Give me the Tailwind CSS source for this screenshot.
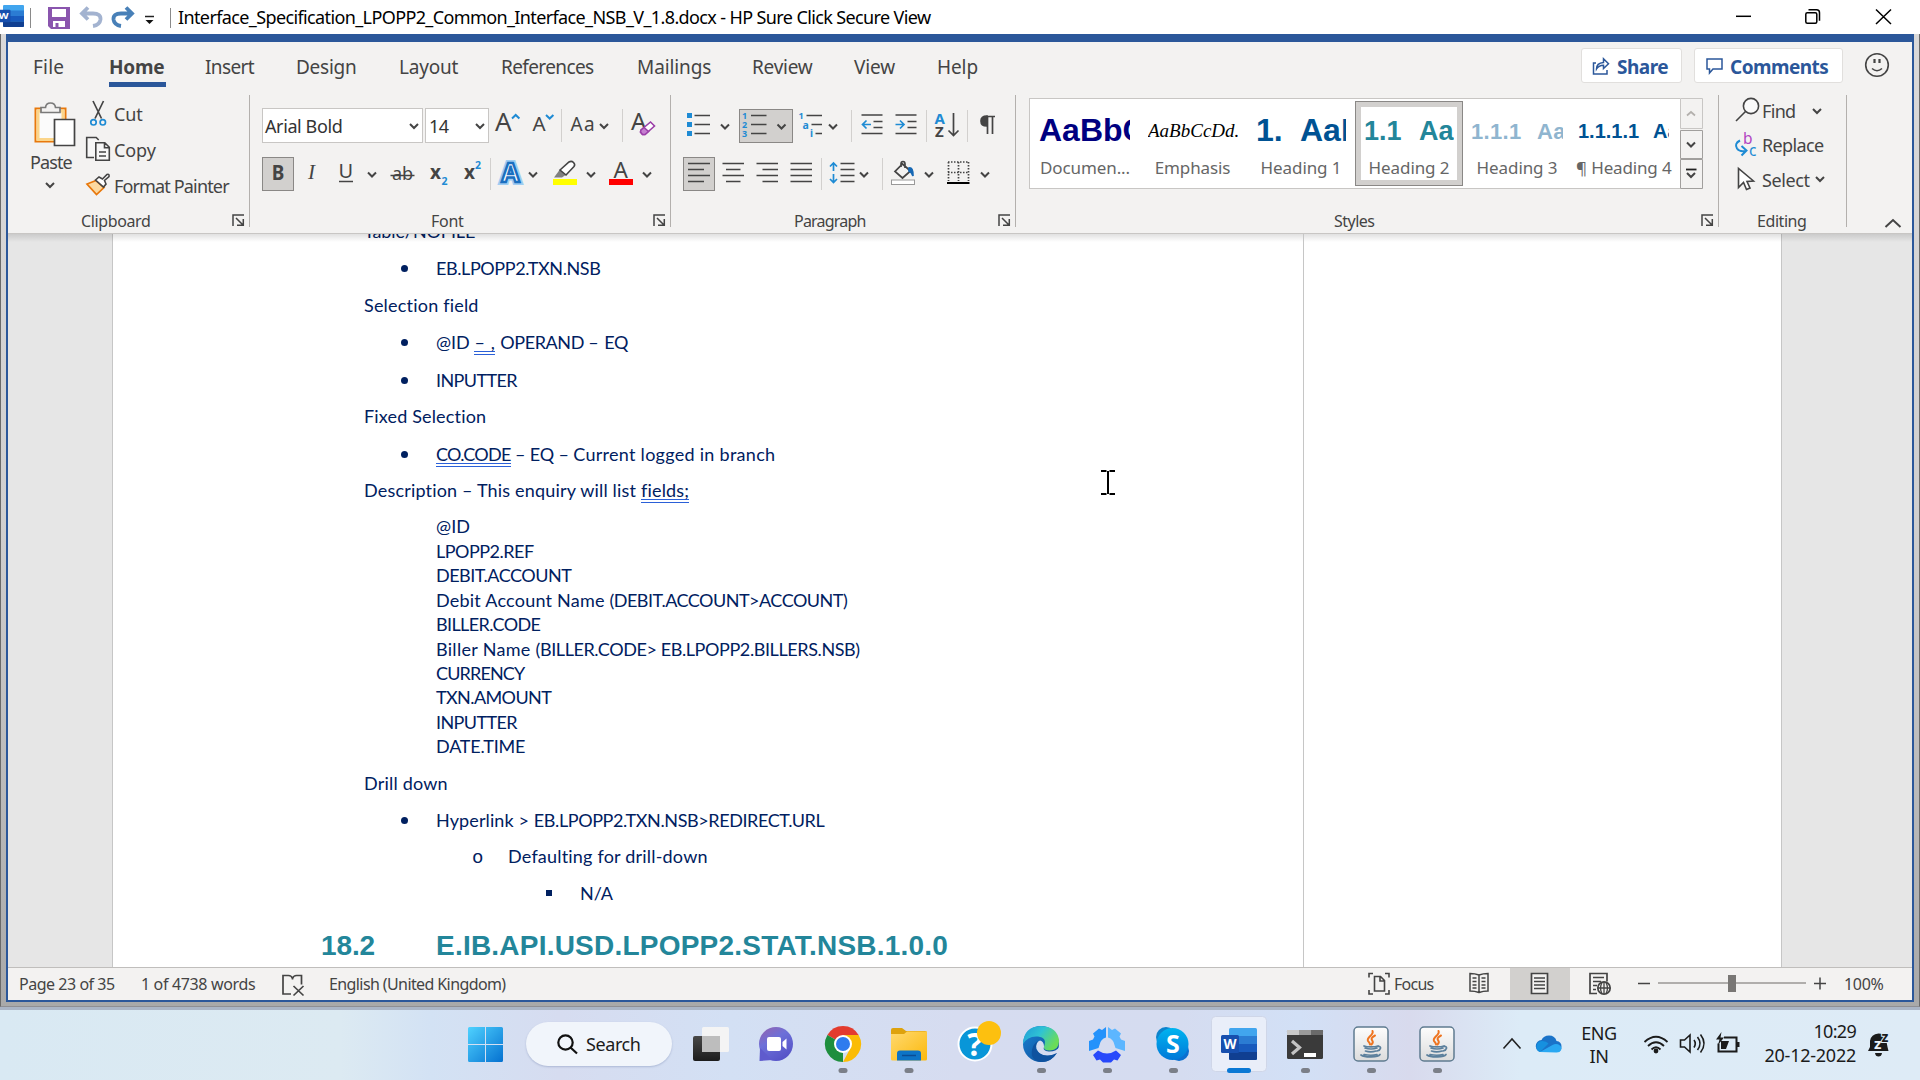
<!DOCTYPE html>
<html lang="en">
<head>
<meta charset="utf-8">
<title>Interface_Specification_LPOPP2_Common_Interface_NSB_V_1.8.docx</title>
<script src="https://cdn.jsdelivr.net/npm/@tailwindcss/browser@4"></script>
</head>
<body class="w-[1920px] h-[1080px] overflow-hidden bg-white font-['Noto_Sans',sans-serif] text-[#444444] whitespace-nowrap">
<svg width="0" height="0" class="absolute">
  <defs>
    <path id="chev" d="M-4 -2 0 2 4 -2" fill="none" stroke="#444" stroke-width="2"/>
    <g id="launch" fill="none" stroke="#444" stroke-width="1.5"><path d="M1 12V1h11M4 4l6.500 6.500M11.300 5v6.300H5"/></g>
    <linearGradient id="sky" x1="468" y1="1027" x2="503" y2="1062" gradientUnits="userSpaceOnUse"><stop offset="0" stop-color="#4fd2ff"/><stop offset="1" stop-color="#0571d0"/></linearGradient>
    <linearGradient id="chat" x1="0" y1="0" x2=".6" y2="1"><stop offset="0" stop-color="#9763ad"/><stop offset=".45" stop-color="#6d70d8"/><stop offset="1" stop-color="#5754c8"/></linearGradient>
    <linearGradient id="fold" x1="0" y1="0" x2="1" y2="1"><stop offset="0" stop-color="#ffd970"/><stop offset="1" stop-color="#fbb90c"/></linearGradient>
    <linearGradient id="edgeTop" x1="0" y1="0" x2="1" y2=".5"><stop offset="0" stop-color="#1f9ad8"/><stop offset=".5" stop-color="#2fc3d4"/><stop offset="1" stop-color="#6bdc58"/></linearGradient>
    <linearGradient id="edgeLow" x1="0" y1="0" x2="1" y2="1"><stop offset="0" stop-color="#1a82d4"/><stop offset="1" stop-color="#0d4a94"/></linearGradient>
    <linearGradient id="skype" x1="0" y1="0" x2="0" y2="1"><stop offset="0" stop-color="#00b4f0"/><stop offset="1" stop-color="#0078d8"/></linearGradient>
    <linearGradient id="dark" x1="0" y1="0" x2="0" y2="1"><stop offset="0" stop-color="#484848"/><stop offset="1" stop-color="#1c1c1c"/></linearGradient>
    <linearGradient id="paper" x1="0" y1="0" x2="0" y2="1"><stop offset="0" stop-color="#fdfdfd"/><stop offset="1" stop-color="#dcdcdc"/></linearGradient>
    <g id="word">
      <rect x="8" y="0" width="28" height="32" rx="1.500" fill="#41a5ee"/>
      <path d="M8 8h28v8H8z" fill="#2b7cd3"/><path d="M8 16h28v8H8z" fill="#185abd"/><path d="M8 24h28v6.500q0 1.500-1.500 1.500H9.500Q8 32 8 30.500z" fill="#103f91"/>
      <rect x="0" y="7" width="18" height="18" rx="1.500" fill="#174fae"/>
      <text x="9" y="20.800" text-anchor="middle" font-family="Noto Sans" font-weight="700" font-size="13.500" fill="#fff">W</text>
    </g>
    <g id="java">
      <rect x="1" y="1" width="34" height="34" rx="4" fill="url(#paper)" stroke="#5f7b90" stroke-width="1.500"/>
      <g fill="none" stroke-linecap="round">
        <path d="M19.500 5c2 4-6.500 6-4.500 10 1 1.500 2 2 2 3.500M22 9.500c-4 2-4 3.500-2.500 5.500 .8 1.300 0 2.500-1 3.500" stroke="#ee7420" stroke-width="2"/>
        <path d="M11 20c3 1.300 11 1.300 14 0M12 22q6 2 12 0M12.500 25q5 1.600 10.500 0M25 20.500c4-.5 3 3.500-1 4.500M8 29c4 2.800 17 2.500 19-.5M11 28.500q7 1.500 13 0" stroke="#5b7f9c" stroke-width="1.700"/>
      </g>
    </g>
  </defs>
</svg>

<!-- Title bar -->
<header class="flex h-[34px] bg-white">
  <svg class="shrink-0" width="176" height="34" viewBox="0 0 176 34">
    <svg x="-3" y="5" width="27" height="22" viewBox="0 0 36 32" preserveAspectRatio="none"><use href="#word"/></svg>
    <path d="M30.500 8v20M170.500 8v20" stroke="#8a8a8a"/>
    <path d="M48 7h22v22H51l-3-3z" fill="#8a55ae"/><path d="M52 9h14v8H52zM53 21h12v6H53z" fill="#fff"/><path d="M55.500 23h3v4h-3z" fill="#8a55ae"/>
    <path d="M82 13.500h11q8 0 7.500 6-.8 5.500-7.500 6.500M88 7.500l-6 6 6 6" fill="none" stroke="#a3b3d0" stroke-width="3.800"/>
    <path d="M132 13.500h-11q-8 0-7.500 6 .8 5.500 7.500 6.500M126 7.500l6 6-6 6" fill="none" stroke="#4880b8" stroke-width="3.800"/>
    <path d="M145 16.500h9" stroke="#222" stroke-width="1.500"/><path d="M145.500 20h8l-4 4z" fill="#111"/>
  </svg>
  <div class="grow pl-[2px] text-[18px] leading-[35px] tracking-[-0.62px] text-black">Interface_Specification_LPOPP2_Common_Interface_NSB_V_1.8.docx - HP Sure Click Secure View</div>
  <svg class="shrink-0" width="220" height="34" viewBox="1700 0 220 34" fill="none" stroke="#000" stroke-width="1.500">
    <path d="M1736 16.300h15"/><rect x="1805.800" y="12.800" width="11" height="10.500" rx="1.500"/><path d="M1808.500 9.800h8q3 0 3 3v8"/><path d="M1876 9.500l15 14.500M1891 9.500 1876 24"/>
  </svg>
</header>

<!-- Application window -->
<main class="h-[973px] border-x border-b border-[#6a6a6a] border-b-[#8f8f93] px-[5px] bg-linear-to-b from-[#dad9d9] via-[#d0cfcf] to-[#a9a9a9]">
<div class="h-[968px] border-2 border-t-8 border-[#2b579a] bg-[#f3f2f1] flex flex-col">

  <!-- Ribbon tabs -->
  <nav class="flex h-[50px] shrink-0 text-[19px] leading-[50px] pl-[25px]">
    <div class="w-[75px] tracking-[0.2px]">File</div>
    <div class="w-[57px] ml-[1px] mr-[39px] h-[45px] border-b-[5px] border-[#2b579a] font-bold tracking-[-0.2px]">Home</div>
    <div class="w-[91px] tracking-[-0.6px]">Insert</div>
    <div class="w-[103px] tracking-[-0.25px]">Design</div>
    <div class="w-[102px] tracking-[-0.2px]">Layout</div>
    <div class="w-[136px] tracking-[-0.61px]">References</div>
    <div class="w-[115px] tracking-[-0.1px]">Mailings</div>
    <div class="w-[102px] tracking-[-0.25px]">Review</div>
    <div class="w-[83px] tracking-[-0.1px]">View</div>
    <div class="tracking-[-0.1px]">Help</div>
    <div class="ml-auto mt-[6px] flex items-center h-[35px] w-[101px] rounded-[3px] border border-[#e1dfdd] bg-white text-[#2b579a] font-bold tracking-[-0.5px]">
      <svg class="ml-[10px] mr-[7px]" width="18" height="18" viewBox="0 0 18 18" fill="none" stroke="#2b579a" stroke-width="1.500"><path d="M4 6H1.500v11H15v-4M4.500 12q0-6 7-6.500V1.800l5 5-5 4.700V8.300Q6.500 8.500 4.500 12z"/></svg><span class="pt-[2px]">Share</span></div>
    <div class="ml-[12px] mt-[6px] flex items-center h-[35px] w-[149px] rounded-[3px] border border-[#e1dfdd] bg-white text-[#2b579a] font-bold tracking-[-0.55px]">
      <svg class="ml-[11px] mr-[7px]" width="17" height="18" viewBox="0 0 17 18" fill="none" stroke="#2b579a" stroke-width="1.500"><path d="M1 2h15v10H7l-3.500 4v-4H1z"/></svg><span class="pt-[2px]">Comments</span></div>
    <svg class="ml-[20px] mr-[21px] mt-[9px]" width="28" height="28" viewBox="1863 51 28 28" fill="none" stroke="#444" stroke-width="1.600"><circle cx="1877" cy="65" r="11.300"/><path d="M1872 68.500q5 4.500 10 0"/><path d="M1874.500 59v4M1879.500 59v4" stroke-width="2.200"/></svg>
  </nav>

  <!-- Ribbon groups -->
  <div class="flex h-[141px] shrink-0 pt-[3px] text-[18px]">

    <section class="w-[242px] h-[132px] border-r border-[#b3b0ad] flex flex-col shrink-0">
      <div class="flex h-[108px]">
        <div class="w-[76px] pl-[22px] shrink-0">
          <svg width="52" height="53" viewBox="30 95 52 53">
            <path d="M35.500 108.500h30v33h-30z" fill="#fff" stroke="#e8780c" stroke-width="2"/><path d="M38 111h25v28.500H38z" fill="#fbfbfb" stroke="#fbd58a" stroke-width="3"/>
            <path d="M41 112.500v-5h4.500q.5-4.500 5-4.500t5 4.500H60v5z" fill="#f3f2f1" stroke="#7a7a7a" stroke-width="1.700"/>
            <path d="M54.500 119.500h20v26h-20z" fill="#fff" stroke="#444" stroke-width="1.700"/>
          </svg>
          <div class="leading-[26px] mt-[1px] tracking-[-0.9px]">Paste</div>
          <svg class="ml-[12px] mt-[5px]" width="16" height="10" viewBox="-8 -5 16 10"><use href="#chev"/></svg>
        </div>
        <div class="flex flex-col pt-[2px]">
          <div class="flex h-[36px] leading-[34px] tracking-[-0.17px]">
            <svg class="w-[30px] shrink-0" height="36" viewBox="84 97 30 36" fill="none" stroke-width="1.700"><path d="M93 101l8.500 17.500M103.500 101 95 118.500" stroke="#444"/><circle cx="93.500" cy="122.300" r="2.700" stroke="#1e8bd4"/><circle cx="102.800" cy="122.300" r="2.700" stroke="#1e8bd4"/></svg>Cut</div>
          <div class="flex h-[36px] leading-[34px] tracking-[-0.1px]">
            <svg class="w-[30px] shrink-0" height="36" viewBox="84 133 30 36" fill="#f7f7f7" stroke="#444" stroke-width="1.600"><path d="M94 157.500h-7.300v-20h9.500l2.500 2.500"/><path d="M95.800 142.800h9l4.500 4.500v13H95.800zM104.500 143v4.700h4.700M99 152h7M99 156h7"/></svg>Copy</div>
          <div class="flex h-[36px] leading-[34px] tracking-[-0.85px]">
            <svg class="w-[30px] shrink-0" height="36" viewBox="84 169 30 36"><path d="M96 180.500l-9 3.500 9.500 10.500 7.500-7z" fill="#fcd9a0" stroke="#e8780c" stroke-width="1.700"/><path d="M95.500 180l3.500-3 3.500 2 4.500-4.500q2.500-1 2 2l-4.500 4 1.500 3.500-2.500 3z" fill="#fff" stroke="#444" stroke-width="1.600"/></svg>Format Painter</div>
        </div>
      </div>
      <div class="flex h-[28px] text-[16px] leading-[39px] tracking-[-0.37px] mt-[-1px]"><span class="pl-[73px] grow">Clipboard</span><svg class="mt-[12px] mr-[4px]" width="13" height="13"><use href="#launch"/></svg></div>
    </section>

    <section class="w-[421px] h-[132px] border-r border-[#b3b0ad] flex flex-col shrink-0 pt-[13px]">
      <div class="flex h-[35px] mb-[14px] pl-[12px]">
        <div class="w-[161px] mr-[2px] border border-[#c8c6c4] bg-white flex items-center pl-[2px] tracking-[-0.4px] text-[#333]"><span class="grow pt-[2px]">Arial Bold</span><svg width="16" height="10" viewBox="-8 -5 16 10"><use href="#chev"/></svg></div>
        <div class="w-[64px] border border-[#c8c6c4] bg-white flex items-center pl-[3px] tracking-[-0.6px] text-[#333]"><span class="grow pt-[2px]">14</span><svg width="16" height="10" viewBox="-8 -5 16 10"><use href="#chev"/></svg></div>
        <svg width="180" height="35" viewBox="489 108 180 35" font-family="Noto Sans" fill="#444">
          <text x="495" y="131" font-size="26">A</text><path d="M512 118.500l3.700-3.500 3.700 3.500" fill="none" stroke="#1e8bd4" stroke-width="2"/>
          <text x="532.500" y="131" font-size="20.500">A</text><path d="M546 115l3.700 3.500 3.700-3.500" fill="none" stroke="#1e8bd4" stroke-width="2"/>
          <path d="M561.500 109v33M622.500 109v33" stroke="#d2d0ce"/>
          <text x="570.500" y="131" font-size="19" letter-spacing="1.300">Aa</text><use href="#chev" x="604" y="126"/>
          <text x="631" y="130" font-size="24">A</text>
          <path d="M641 130l9.500-8 4 4-9.500 8.500h-2.500l-2-2.500z" fill="#fff" stroke="#9b3fa8" stroke-width="1.600"/><path d="M641 130l3-2.500 4.500 4-3.500 3h-2.500l-2-2.500z" fill="#c57fd0" stroke="#9b3fa8" stroke-width="1.500"/>
        </svg>
      </div>
      <div class="flex h-[34px] pl-[12px]">
        <div class="w-[32px] border border-[#8a8886] bg-[#d2d0ce] text-center font-bold text-[21px] leading-[29px]"><span class="inline-block scale-x-90">B</span></div>
        <svg width="375" height="34" viewBox="294 157 375 34" font-family="Noto Sans" fill="#444">
          <text x="308" y="179" font-size="21" font-family="Liberation Serif" font-style="italic">I</text>
          <text x="338.500" y="178" font-size="20">U</text><path d="M339 181.500h14" stroke="#444" stroke-width="1.500"/><use href="#chev" x="372" y="174.500"/>
          <text x="392" y="180" font-size="18">ab</text><path d="M390.500 175.500h24" stroke="#444" stroke-width="1.500"/>
          <text x="430" y="179" font-size="19" font-weight="700">x</text><text x="441.500" y="184.500" font-size="10.500" font-weight="700" fill="#1e8bd4">2</text>
          <text x="464" y="179" font-size="19" font-weight="700">x</text><text x="475" y="169" font-size="10.500" font-weight="700" fill="#1e8bd4">2</text>
          <path d="M490.500 158v32" stroke="#d2d0ce"/>
          <text x="501.500" y="182" font-size="26" font-weight="700" fill="#fff" stroke="#9fcdf2" stroke-width="6" aria-hidden="true">A</text><text x="501.500" y="182" font-size="26" font-weight="700" fill="#fff" stroke="#1a6fc0" stroke-width="2.400">A</text><use href="#chev" x="533" y="174.500"/>
          <path d="M553 179h24v6h-24z" fill="#ff0"/><path d="M554 177.500l5.500-7.500 6 5-3.500 2.500z" fill="#808080"/><path d="M560 170l9-8q2.500-1.500 4.500.5t.5 4l-8 8.500z" fill="#fff" stroke="#444" stroke-width="1.600"/><use href="#chev" x="591" y="174.500"/>
          <text x="613.500" y="177.500" font-size="22.500">A</text><path d="M609 179h24v6h-24z" fill="#f00"/><use href="#chev" x="647" y="174.500"/>
        </svg>
      </div>
      <div class="flex h-[28px] text-[16px] leading-[39px] tracking-[-0.3px] mt-[11px]"><span class="pl-[181px] grow">Font</span><svg class="mt-[12px] mr-[4px]" width="13" height="13"><use href="#launch"/></svg></div>
    </section>

    <section class="w-[345px] h-[132px] border-r border-[#b3b0ad] flex flex-col shrink-0 pt-[13px]">
      <svg width="344" height="84" class="shrink-0" viewBox="671 108 344 84" fill="none" stroke="#444" stroke-width="1.700" font-family="Noto Sans">
        <path d="M694.500 115.500h15.500M694.500 124.500h15.500M694.500 133.500h15.500"/><path d="M687 113h5v5h-5zM687 122h5v5h-5zM687 131h5v5h-5z" fill="#1e8bd4" stroke="none"/><use href="#chev" x="725" y="126.500"/>
        <rect x="739.500" y="109.500" width="53" height="33" fill="#d2d0ce" stroke="#8a8886" stroke-width="1"/>
        <path d="M751 115.500h15.500M751 124.500h15.500M751 133.500h15.500"/><g fill="#1e8bd4" stroke="none" font-weight="700" font-size="9"><text x="742" y="119">1</text><text x="742" y="128">2</text><text x="742" y="137">3</text><text x="798.500" y="119">1</text><text x="802.500" y="128.500" font-size="10.500">a</text><text x="810" y="137" font-size="10">i</text></g><use href="#chev" x="781.500" y="126.500"/>
        <path d="M806.500 115.500h15.500M811.500 124.500h10.500M815.500 133.500h6.500"/><use href="#chev" x="833" y="126.500"/>
        <path d="M851.500 110v32M926.500 110v32M967.500 110v32M821.500 158v32M882.500 158v32" stroke="#d2d0ce" stroke-width="1"/>
        <path d="M861.500 115h21M873.500 121.500h9M873.500 127.500h9M861.500 133.500h21"/><path d="M871 124.500h-8.500M866.500 120.500l-4 4 4 4" stroke="#1e8bd4"/>
        <path d="M895.500 115h21M907.500 121.500h9M907.500 127.500h9M895.500 133.500h21"/><path d="M895.500 124.500h8.500M900 120.500l4 4-4 4" stroke="#1e8bd4"/>
        <g stroke="none" font-size="15" font-weight="700"><text x="934.500" y="124" fill="#1e8bd4">A</text><text x="935" y="137" fill="#444">Z</text></g><path d="M953.500 113v22M948.500 130.500l5 5 5-5"/>
        <path d="M987.500 116v18M992.500 116v18M995 116.500h-9" /><path d="M987 116q-6 0-6 5t6 5z" fill="#444"/>
        <rect x="683.500" y="157.500" width="31" height="33" fill="#d2d0ce" stroke="#8a8886" stroke-width="1"/>
        <path d="M688 163.500h22M688 169.500h16M688 175.500h22M688 181.500h16M722.500 163.500h21.500M726 169.500h14.500M722.500 175.500h21.500M726 181.500h14.500M756.500 163.500h21.500M762.500 169.500h15.500M756.500 175.500h21.500M762.500 181.500h15.500M790.500 163.500h21.500M790.500 169.500h21.500M790.500 175.500h21.500M790.500 181.500h21.500"/>
        <path d="M840.500 163.500h14M840.500 169.500h14M840.500 175.500h14M840.500 181.500h14"/><path d="M833.500 164v7M830 166.500l3.500-3.500 3.500 3.500M833.500 174v8M830 179l3.500 3.500 3.500-3.500" stroke="#1e8bd4"/><use href="#chev" x="864" y="174.500"/>
        <rect x="891.500" y="180" width="23" height="4.500" fill="#fff" stroke="#999" stroke-width="1"/><path d="M902.500 164l8 7-8 7-7.500-6.500zM901 167v-3q0-2.500 2-2.500t2 2.500v4"/><path d="M909 168q4-1 4 8-1.500-4-4-5z" fill="#1668b4" stroke="#1668b4"/><use href="#chev" x="929" y="174.500"/>
        <path d="M948 162h21M948 172.500h21M948.500 162v19M958.500 162v19M968.500 162v19" stroke-dasharray="1.500 1.500"/><path d="M947 183h22.500" stroke="#000" stroke-width="2"/><use href="#chev" x="985" y="174.500"/>
      </svg>
      <div class="flex h-[28px] text-[16px] leading-[39px] tracking-[-0.8px] mt-[10px]"><span class="pl-[123px] grow">Paragraph</span><svg class="mt-[12px] mr-[4px]" width="13" height="13"><use href="#launch"/></svg></div>
    </section>

    <section class="w-[703px] h-[132px] border-r border-[#b3b0ad] flex flex-col shrink-0 pt-[3px] pl-[13px]">
      <div class="flex h-[91px] w-[675px]">
        <div class="flex w-[651px] border border-r-0 border-[#c8c6c4] bg-white pl-[1px] text-[17px] text-[#666] tracking-[-0.1px] font-['Liberation_Sans',sans-serif]">
          <div class="w-[108px] px-[9px] pt-[9px]"><div class="h-[48px] leading-[45px] overflow-hidden text-[32px] font-bold text-[#000080] tracking-normal -ml-[1px] w-[91px]">AaBbCc</div><div class="font-['Noto_Sans'] leading-[24px]">Documen...</div></div>
          <div class="w-[108px] px-[9px] pt-[9px]"><div class="h-[48px] leading-[45px] overflow-hidden font-['Liberation_Serif'] italic text-[19px] text-black tracking-[0px]">AaBbCcDd.</div><div class="font-['Noto_Sans'] leading-[24px] text-center -ml-[1px]">Emphasis</div></div>
          <div class="w-[108px] px-[9px] pt-[9px]"><div class="h-[48px] leading-[45px] overflow-hidden text-[32px] font-bold text-[#005293] tracking-normal flex"><span class="w-[44px] shrink-0">1.</span>AaB</div><div class="font-['Noto_Sans'] leading-[24px] text-center">Heading 1</div></div>
          <div class="w-[108px] my-[2px] px-[3px] pt-[6px] border border-[#8a8886] ring-5 ring-inset ring-[#d2d0ce] flex flex-col items-center"><div class="w-[90px] h-[48px] leading-[46px] overflow-hidden text-[27px] font-bold text-[#23869a] tracking-normal flex"><span class="w-[55px] shrink-0">1.1</span>Aa</div><div class="font-['Noto_Sans'] leading-[24px] text-center">Heading 2</div></div>
          <div class="w-[108px] px-[8px] pt-[9px]"><div class="h-[48px] leading-[47px] overflow-hidden text-[22px] font-bold text-[#8fb5cf] tracking-[0.3px] flex"><span class="w-[66px] shrink-0">1.1.1</span>Aa</div><div class="font-['Noto_Sans'] leading-[24px] text-center">Heading 3</div></div>
          <div class="w-[108px] px-[7px] pt-[9px]"><div class="h-[48px] leading-[46px] w-[91px] overflow-hidden text-[20px] font-bold text-[#005293] tracking-normal flex"><span class="w-[75px] shrink-0">1.1.1.1</span>Aa</div><div class="font-['Noto_Sans'] leading-[24px] tracking-[-0.16px] -ml-[2px]">¶ Heading 4</div></div>
        </div>
        <svg width="24" height="91" viewBox="1680 98 24 91" fill="#f3f2f1" stroke="#a19f9d"><path d="M1680.500 98.500h22v30h-22z" stroke="#c8c6c4"/><path d="M1680.500 130.500h22v28h-22zM1680.500 159.500h22v29h-22z"/><path d="M1687 115.500l4-3.500 4 3.500" fill="none" stroke="#b3b0ad" stroke-width="1.700"/><g stroke="none"><use href="#chev" x="1691" y="144.500"/><use href="#chev" x="1691" y="175"/></g><path d="M1686 169.500h10.500" stroke="#222" stroke-width="1.800"/></svg>
      </div>
      <div class="flex h-[28px] text-[16px] leading-[39px] tracking-[-0.5px] mt-[13px]"><span class="pl-[305px] grow">Styles</span><svg class="mt-[12px] mr-[4px]" width="13" height="13"><use href="#launch"/></svg></div>
    </section>

    <section class="w-[128px] h-[132px] border-r border-[#b3b0ad] flex flex-col shrink-0">
      <div class="flex h-[34px] leading-[33px] tracking-[-0.67px]"><svg class="w-[43px] shrink-0" height="34" viewBox="1719 95 43 34" fill="#fafafa" stroke="#444" stroke-width="1.600"><circle cx="1751" cy="106" r="7.600"/><path d="M1745.500 111.500l-9.500 9.500"/></svg>Find<svg class="ml-[13px]" width="16" height="34" viewBox="-8 -16 16 34"><use href="#chev"/></svg></div>
      <div class="flex h-[34px] leading-[33px] tracking-[-0.64px]"><svg class="w-[43px] shrink-0" height="34" viewBox="1719 129 43 34" font-family="Noto Sans"><text x="1743" y="143.500" font-size="15.500" fill="#b146c2">b</text><text x="1749" y="155.500" font-size="15.500" fill="#1e8bd4">c</text><path d="M1740 140.500q-6 3-3 8 2.500 3.500 8 2.500M1741.500 146l5 4.500-5 5" fill="none" stroke="#1e8bd4" stroke-width="2"/></svg>Replace</div>
      <div class="flex h-[34px] leading-[34px] tracking-[-0.41px]"><svg class="w-[43px] shrink-0" height="34" viewBox="1719 163 43 34"><path d="M1738.500 168.500v19l5-5 3 7 3.500-1.500-3-6.500 6.500-.5z" fill="#fff" stroke="#444" stroke-width="1.600"/></svg>Select<svg class="ml-[2px]" width="16" height="34" viewBox="-8 -16 16 34"><use href="#chev"/></svg></div>
      <div class="text-[16px] leading-[39px] tracking-[-0.43px] mt-[5px] pl-[38px] h-[28px]">Editing</div>
    </section>
    <svg class="ml-[36px] mt-[119px]" width="20" height="16" viewBox="1883 214 20 16"><path d="M1885.500 227l7.500-7 7.500 7" fill="none" stroke="#444" stroke-width="2"/></svg>
  </div>

  <!-- Document -->
  <div class="flex h-[734px] shrink-0 border-t border-[#c8c6c4] bg-[#e6e6e6] relative overflow-hidden">
    <div class="absolute inset-x-0 top-0 h-[8px] bg-linear-to-b from-black/12 to-transparent"></div>
    <svg class="absolute left-[1090px] top-[234px]" width="20" height="30" viewBox="1098 468 20 30"><path d="M1101 471h5.500M1109.500 471h5.500M1108 471v23M1101 494h5.500M1109.500 494h5.500" fill="none" stroke="#000" stroke-width="2"/></svg>
    <div class="ml-[104px] w-[1192px] h-[740px] bg-white border-l border-[#c6c6c6] pl-[251px] font-['Lato',sans-serif] text-[18px] leading-[24px] text-[#002060]">
      <div class="-mt-[15px] h-[37px] tracking-[-0.1px]">Table/NOFILE</div>
      <div class="h-[37px] flex"><span class="mt-[9px] ml-[37px] mr-[28px] size-[7px] rounded-full bg-[#002060]"></span><span class="tracking-[-0.4px]">EB.LPOPP2.TXN.NSB</span></div>
      <div class="h-[37px] tracking-[0.2px]">Selection field</div>
      <div class="h-[38px] flex"><span class="mt-[9px] ml-[37px] mr-[28px] size-[7px] rounded-full bg-[#002060]"></span><span class="tracking-[-0.42px]"><span class="tracking-[0px]">@ID </span><span class="inline-block leading-[17px] border-b-4 border-double border-[#2b60d8] tracking-[0.6px]">– ,</span><span class="tracking-[0.4px]"> </span>OPERAND <span class="tracking-[0.5px]">– </span>EQ</span></div>
      <div class="h-[36px] flex"><span class="mt-[9px] ml-[37px] mr-[28px] size-[7px] rounded-full bg-[#002060]"></span><span class="tracking-[-0.6px]">INPUTTER</span></div>
      <div class="h-[38px] tracking-[0.16px]">Fixed Selection</div>
      <div class="h-[36px] flex"><span class="mt-[9px] ml-[37px] mr-[28px] size-[7px] rounded-full bg-[#002060]"></span><span><span class="inline-block leading-[17px] border-b-4 border-double border-[#2b60d8] tracking-[-0.75px]">CO.CODE</span><span class="tracking-[-0.15px]"> – EQ – </span><span class="tracking-[0.28px]">Current logged in branch</span></span></div>
      <div class="h-[36px] tracking-[0.18px]">Description – This enquiry will list <span class="inline-block leading-[17px] border-b-4 border-double border-[#2b60d8]">fields;</span></div>
      <div class="pl-[72px] tracking-[-0.5px]">
        <div class="h-[25px] tracking-[0.1px]">@ID</div>
        <div class="h-[24px]">LPOPP2.REF</div>
        <div class="h-[25px]">DEBIT.ACCOUNT</div>
        <div class="h-[24px]"><span class="tracking-[0.22px]">Debit Account Name </span>(DEBIT.ACCOUNT&gt;ACCOUNT)</div>
        <div class="h-[25px] tracking-[-0.6px]">BILLER.CODE</div>
        <div class="h-[24px]"><span class="tracking-[0.3px]">Biller Name </span><span class="tracking-[-0.4px]">(BILLER.CODE&gt; EB.LPOPP2.BILLERS.NSB)</span></div>
        <div class="h-[24px] tracking-[-0.85px]">CURRENCY</div>
        <div class="h-[25px] tracking-[-0.6px]">TXN.AMOUNT</div>
        <div class="h-[24px] tracking-[-0.6px]">INPUTTER</div>
        <div class="h-[37px] tracking-[-0.2px]">DATE.TIME</div>
      </div>
      <div class="h-[37px] tracking-[0.2px]">Drill down</div>
      <div class="h-[36px] flex"><span class="mt-[9px] ml-[37px] mr-[28px] size-[7px] rounded-full bg-[#002060]"></span><span><span class="tracking-[0.12px]">Hyperlink &gt; </span><span class="tracking-[-0.4px]">EB.LPOPP2.TXN.NSB&gt;REDIRECT.URL</span></span></div>
      <div class="h-[37px] flex"><span class="ml-[108px] w-[36px] pt-[2px] font-['Liberation_Mono'] text-[19px]">o</span><span class="tracking-[0.2px]">Defaulting for drill-down</span></div>
      <div class="h-[49px] flex"><span class="mt-[9px] ml-[182px] mr-[28px] size-[6px] bg-[#002060]"></span><span>N/A</span></div>
      <div class="-ml-[43px] flex font-['Liberation_Sans',sans-serif] font-bold text-[28px] leading-[32px] tracking-[0.22px] text-[#23869a]"><span class="w-[115px] tracking-[-0.1px]">18.2</span><span>E.IB.API.USD.LPOPP2.STAT.NSB.1.0.0</span></div>
    </div>
    <div class="absolute left-[1295px] top-0 w-px h-full bg-[#c6c6c6]"></div>
    <div class="w-[479px] -ml-px bg-white border-r border-[#c6c6c6]"></div>
  </div>

  <!-- Status bar -->
  <footer class="flex h-[33px] shrink-0 border-t border-[#c0bebc] text-[16px] leading-[33px] pl-[11px]">
    <span class="w-[122px] tracking-[-0.47px]">Page 23 of 35</span>
    <span class="w-[139px] tracking-[-0.35px]">1 of 4738 words</span>
    <svg class="w-[49px]" height="32" viewBox="280 968 49 32" fill="none" stroke="#444" stroke-width="1.700"><path d="M292.500 979.500v-1q-1-3-4-3h-5.500v18.500h8M292.500 978.500q1-3 4-3h5v9M293.500 986l10 9.500M303.500 986l-10 9.500"/></svg>
    <span class="grow tracking-[-0.6px]">English (United Kingdom)</span>
    <svg class="w-[32px]" height="32" viewBox="1362 968 32 32" fill="none" stroke="#444" stroke-width="1.600"><path d="M1373 973.500h-4v4M1385 973.500h4v4M1373 994h-4v-4M1385 994h4v-4M1374.500 976.500h6l4 4V991h-10zM1380 977v4h4"/></svg>
    <span class="w-[46px] tracking-[-0.75px]">Focus</span>
    <svg height="32" class="w-[198px]" viewBox="1440 968 198 32" fill="none" stroke="#444" stroke-width="1.700">
      <path d="M1510 968h60v32h-60z" fill="#d2d0ce" stroke="none"/>
      <path d="M1479 975q-4-1.500-9-1.500V991q5 0 9 1.500 4-1.500 9-1.500v-17.500q-5 0-9 1.500zM1479 975v17M1472.500 978h4M1472.500 981.500h4M1472.500 985h4M1472.500 988h4M1481.500 978h4M1481.500 981.500h4M1481.500 985h4M1481.500 988h4" stroke-width="1.500"/>
      <path d="M1531.500 973.500h16v20h-16zM1534 978h11M1534 981.500h11M1534 985h11M1534 988.500h11" fill="#f3f2f1"/>
      <path d="M1597 993.500h-7v-20h17v8M1593 977.500h11M1593 981.500h8M1593 985.500h4M1593 989.500h3"/><circle cx="1604" cy="988" r="6.200" fill="#f3f2f1"/><path d="M1598 988h12M1604 982v12M1602 982.500q-3 5.500 0 11M1606 982.500q3 5.500 0 11" stroke-width="1.300"/>
    </svg>
    <svg height="32" class="w-[206px]" viewBox="1638 968 206 32"><path d="M1638 983.500h12M1814 983.500h12M1820 977.500v12" stroke="#444" stroke-width="1.500"/><path d="M1658 983h148" stroke="#b0aeac" stroke-width="2"/><path d="M1728 975h8v17h-8z" fill="#797775"/></svg>
    <span class="w-[68px] tracking-[-0.3px]">100%</span>
  </footer>
</div>
</main>

<!-- Taskbar -->
<div class="flex h-[73px] border-t-3 border-[#aab5c6] text-[18px] text-[#1b1b1b] bg-[linear-gradient(90deg,#d9e9f3_0px,#dceaf2_340px,#d3e2f4_430px,#d6dcf0_560px,#d3e0f4_730px,#d6dcf0_960px,#d5dcf0_1180px,#d2e0f6_1300px,#d8daed_1410px,#dcebf7_1520px,#deebf6_1920px)]">
  <svg class="shrink-0 ml-[452px]" width="66" height="70" viewBox="452 1010 66 70"><path d="M468 1028.500q0-1.500 1.500-1.500H485v17h-17zM486 1027h15.500q1.500 0 1.500 1.500V1044h-17zM468 1045h17v17h-15.500q-1.500 0-1.500-1.500zM486 1045h17v15.500q0 1.500-1.500 1.500H486z" fill="url(#sky)"/></svg>
  <div class="ml-[8px] mr-[6px] mt-[12px] h-[44px] w-[146px] rounded-full bg-[#f1f5fb] shadow-[0_1px_2px_rgba(80,100,150,0.3)] flex items-center leading-[44px] tracking-[-0.41px]"><svg class="ml-[31px] mr-[8px]" width="21" height="21" viewBox="0 0 21 21" fill="none" stroke="#111" stroke-width="2.200"><circle cx="8.500" cy="8.500" r="7.200"/><path d="M13.500 13.500l6.500 6"/></svg>Search</div>
  <svg class="shrink-0" width="792" height="70" viewBox="678 1010 792 70">
    <rect x="693" y="1036" width="27" height="25" rx="2" fill="url(#dark)"/><rect x="702" y="1027" width="27" height="25" rx="1.500" fill="#f4f4f4"/><path d="M702 1036h18v16h-18z" fill="#bdbdbd"/>
    <circle cx="776" cy="1044" r="17" fill="url(#chat)"/><path d="M760 1048l-.5 13 13-1z" fill="#5f5bcd"/><rect x="767" y="1037" width="14" height="14" rx="2" fill="#fff"/><path d="M782.500 1042l4-3.500v11l-4-3.500z" fill="#fff"/>
    <path d="M843 1044 827.400 1035a18 18 0 0 1 31.200 0z" fill="#e33b2e"/><path d="M843 1044l-15.600-9a18 18 0 0 0 15.600 27z" fill="#1e8e3e"/><path d="M843 1062a18 18 0 0 0 15.600-27H843l7.500 13z" fill="#fbbc04"/><circle cx="843" cy="1044" r="9" fill="#fff"/><circle cx="843" cy="1044" r="7" fill="#2f7bee"/>
    <path d="M891 1030q0-2 2-2h9l4 3h19q2 0 2 2v5h-36z" fill="#dea20d"/><path d="M891 1034h13l3-2.500h20V1059q0 1.500-1.500 1.500h-33q-1.500 0-1.500-1.500z" fill="url(#fold)"/><path d="M897 1060.500v-7q0-3 3-3h18q3 0 3 3v7z" fill="#0d74c6"/><path d="M902 1055.500h14" stroke="#0a4c94" stroke-width="1.500"/>
    <circle cx="975" cy="1044" r="16.500" fill="#0896d8" stroke="#fff" stroke-width="2"/><text x="975" y="1056" text-anchor="middle" font-family="Noto Sans" font-weight="700" font-size="32" fill="#fff">?</text><circle cx="989" cy="1033" r="12" fill="#fdc00f"/>
    <circle cx="1041" cy="1044" r="18" fill="url(#edgeLow)"/><path d="M1023 1044q.5-17.500 18-18 17 1 18 15 0 9-9 9.500-7 0-6-4 3.500-9-6-10-10-1-15 7.500z" fill="url(#edgeTop)"/><path d="M1059.500 1047q-4 5-11 4.500-6-.5-4.500-5 0-5-4-6-5 2-3.500 8.500 3 7 12 7 6 0 9.500-4z" fill="#d5dcf0"/><path d="M1038 1041q-5 7 1 12 7 5 18 0-6 9.500-16 9-11-2-9-12 1-6 6-9z" fill="#0f529f"/>
    <path d="M1106 1027v10.500q-5.500 1.500-6.500 7.500l-1 3-9.500 3v-10l4-1.500 1.500-3-1.500-3 6-5 3 1.500z" fill="#2492fb"/><path d="M1108 1027v10.500q5.500 1.500 6.500 7.500l1 3 9.500 3v-10l-4-1.500-1.500-3 1.500-3-6-5-3 1.500z" fill="#5cb6ff"/><path d="M1093 1055l5-4.500q9 6 18 0l5 4.500-3.500 5.500-3.500-1-3 3h-8l-3-3-3.500 1z" fill="#2748fb"/>
    <circle cx="1166" cy="1037" r="10" fill="#0d83cc"/><circle cx="1179" cy="1051" r="10" fill="#0a6fd0"/><circle cx="1172.500" cy="1044" r="16" fill="url(#skype)"/><text x="1173" y="1053" text-anchor="middle" font-family="Noto Sans" font-weight="700" font-size="25" fill="#fff">S</text>
    <rect x="1211.500" y="1016.500" width="55" height="55" rx="4" fill="#e9eef9" stroke="#cfd6e8"/><use href="#word" x="1221" y="1028"/><rect x="1227" y="1068" width="24" height="5" rx="2.500" fill="#0a78d4"/>
    <rect x="1287" y="1030" width="36" height="29" rx="1.500" fill="#3a3a3a"/><path d="M1287 1030h12v5h-12z" fill="#c8c8c8"/><path d="M1299 1030h12v5h-12z" fill="#9a9a9a"/><path d="M1311 1030h12v5h-12z" fill="#6a6a6a"/><path d="M1292 1041l7.500 6.500-7.500 6.500" fill="none" stroke="#c4c4c4" stroke-width="3.200"/><path d="M1304 1053h12v4h-12z" fill="#fff"/>
    <use href="#java" x="1353" y="1026"/><use href="#java" x="1419" y="1026"/>
    <g fill="#7b7f88"><rect x="838.500" y="1068" width="9" height="5" rx="2.500"/><rect x="904.500" y="1068" width="9" height="5" rx="2.500"/><rect x="1037" y="1068" width="9" height="5" rx="2.500"/><rect x="1103" y="1068" width="9" height="5" rx="2.500"/><rect x="1169" y="1068" width="9" height="5" rx="2.500"/><rect x="1301" y="1068" width="9" height="5" rx="2.500"/><rect x="1367" y="1068" width="9" height="5" rx="2.500"/><rect x="1433" y="1068" width="9" height="5" rx="2.500"/></g>
  </svg>
  <svg class="shrink-0" width="102" height="70" viewBox="1470 1010 102 70"><path d="M1503.500 1048.500l8.500-9.500 8.500 9.500" fill="none" stroke="#222" stroke-width="1.600"/><path d="M1542 1052a6 6 0 0 1-.5-12q2-4.500 7.500-4.500 6 0 7.500 5.500 5 .5 5 5.500 0 5.500-5.500 5.500z" fill="#1a73c9"/><path d="M1540 1052q-4-1-3.500-6 1-5 6-5 4 0 6 2.500z" fill="#1690df"/><path d="M1540 1052l12.500-7q4-2 7.500.5 2.500 2.500 1 4.500-1 2.500-4.500 2.500z" fill="#2aa8f2"/></svg>
  <div class="w-[54px] text-center leading-[23px] pt-[12px] tracking-[-0.43px]">ENG<br>IN</div>
  <svg class="shrink-0" width="124" height="70" viewBox="1626 1010 124 70" fill="none" stroke="#1b1b1b" stroke-width="1.800"><path d="M1644.500 1042q11.500-10.500 23 0M1648 1046q8-7.500 16 0M1651.500 1049.500q4.500-4.500 9 0"/><circle cx="1656" cy="1051" r="1.500" fill="#1b1b1b"/>
    <path d="M1680.500 1040h4l5.500-5v17l-5.500-5h-4zM1694 1040q2.500 3.500 0 7.500M1697.500 1037q5 6.500 0 13M1700.500 1034.500q7 9 0 18" stroke-width="1.600"/>
    <path d="M1724 1037.500h12.500v14h-18v-8M1738.500 1042v5" stroke-width="2"/><path d="M1721 1041h8l-3 8h-5z" fill="#1b1b1b" stroke="none"/><path d="M1721.500 1032l-5.500 7.500h3.500l-1.500 5.500 6-7.500h-3.500z" fill="#1b1b1b" stroke="none"/></svg>
  <div class="w-[106px] text-right leading-[24px] pt-[9px]"><div class="tracking-[-0.7px]">10:29</div><div class="tracking-[-0.25px]">20-12-2022</div></div>
  <svg class="shrink-0" width="64" height="70" viewBox="1856 1010 64 70"><path d="M1868 1051l2-4v-6q1-7 8.500-7.500 5 0 7 3l2 10.500 1 4zM1875 1053h7q-.5 3.500-3.500 3.500t-3.500-3.500z" fill="#1b1b1b"/><g font-family="Noto Sans" font-weight="700"><text x="1874" y="1048.500" font-size="15" fill="#eaf2f9">z</text><text x="1881.500" y="1042" font-size="14" fill="#1b1b1b" stroke="#deebf6" stroke-width="2" paint-order="stroke">z</text></g></svg>
</div>
</body>
</html>
